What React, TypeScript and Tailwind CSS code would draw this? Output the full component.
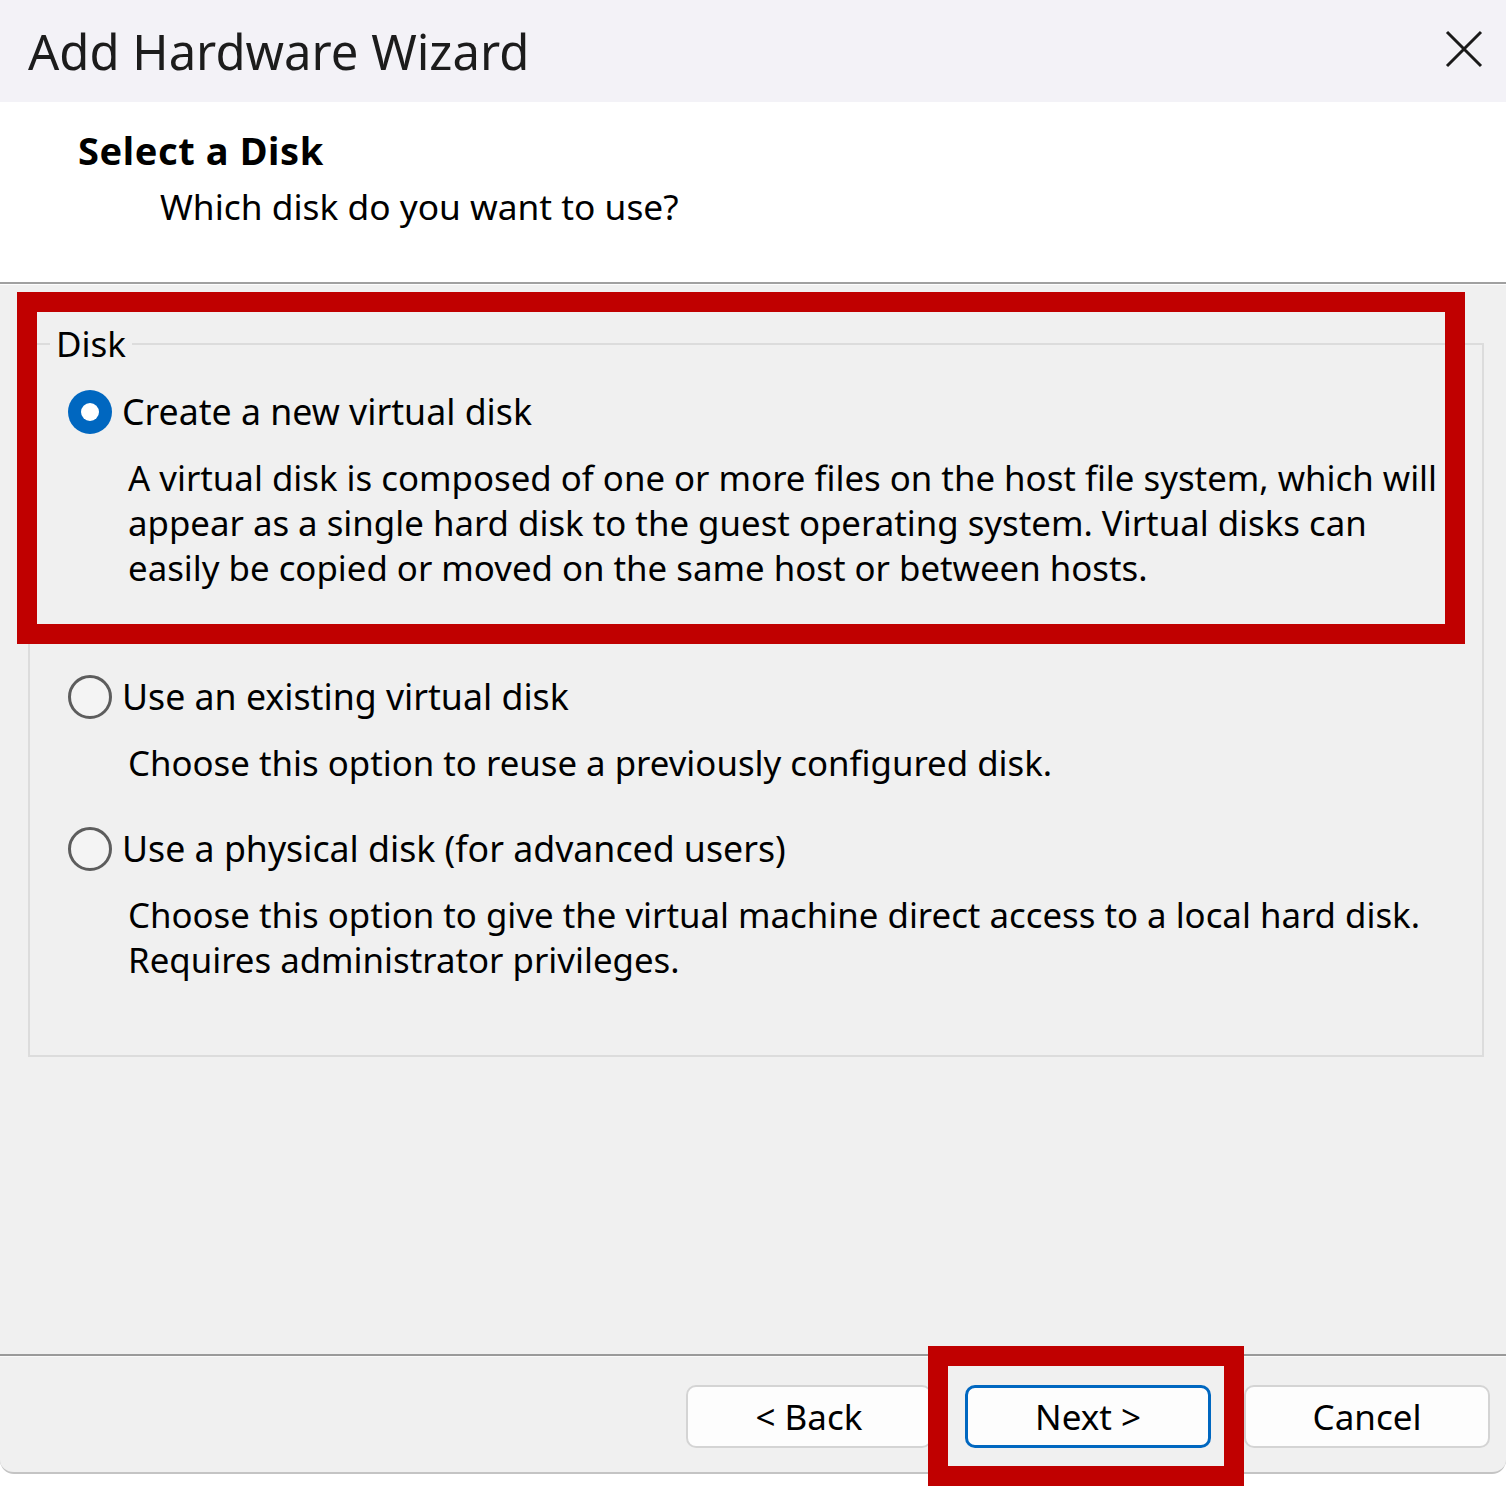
import React from "react";

const Radio = ({ checked }: { checked?: boolean }) =>
  checked ? (
    <span className="flex h-[44px] w-[44px] shrink-0 items-center justify-center rounded-full bg-[#0067c0]">
      <span className="h-[18px] w-[18px] rounded-full bg-white" />
    </span>
  ) : (
    <span className="h-[44px] w-[44px] shrink-0 rounded-full border-[3px] border-[#5d5d5d] bg-[#f4f4f4]" />
  );

const Option = ({
  label,
  lines,
  checked,
  className,
}: {
  label: string;
  lines: string[];
  checked?: boolean;
  className?: string;
}) => (
  <div className={className}>
    <div className="flex h-[45px] items-center gap-[10px] text-[35.7px]">
      <Radio checked={checked} />
      <span>{label}</span>
    </div>
    <div className="mt-[21px] pl-[60px] text-[34.8px]">
      {lines.map((l) => (
        <div key={l} className="whitespace-nowrap">
          {l}
        </div>
      ))}
    </div>
  </div>
);

const Button = ({ children, primary }: { children: React.ReactNode; primary?: boolean }) => (
  <button
    className={
      "flex h-[63px] w-[246px] items-center justify-center rounded-[10px] bg-[#fdfdfd] " +
      (primary ? "border-[3px] border-[#0067c0]" : "border-2 border-[#d4d4d4]")
    }
  >
    {children}
  </button>
);

export default function App() {
  return (
    <div className="relative h-[1486px] w-[1506px] overflow-hidden bg-white font-['Noto_Sans',sans-serif] text-[35px] leading-[45px] text-black">
      <div className="flex h-[1474px] flex-col overflow-hidden rounded-b-[14px] border-b-2 border-[#c4c4c4] bg-[#f0f0f0]">
        {/* title bar */}
        <div className="flex h-[102px] shrink-0 items-center justify-between bg-[#f3f2f7] pl-[28px] pr-[22px]">
          <span className="text-[49px] leading-none text-[#1c1c1c]">Add Hardware Wizard</span>
          <svg width="40" height="40" viewBox="0 0 40 40" className="mt-[-4px]">
            <path d="M3 3 L37 37 M37 3 L3 37" stroke="#1a1a1a" strokeWidth="3" />
          </svg>
        </div>

        {/* header */}
        <div className="h-[180px] shrink-0 bg-white pl-[78px] pt-[26px]">
          <div className="text-[38px] font-bold tracking-[0.6px]">Select a Disk</div>
          <div className="mt-[11px] pl-[82px] text-[35.3px]">Which disk do you want to use?</div>
        </div>
        <div className="h-[2px] shrink-0 bg-[#a0a0a0]" />
        <div className="h-[1px] shrink-0 bg-[#fdfdfd]" />

        {/* body */}
        <div className="flex-1 pl-[28px] pr-[22px] pt-[36px]">
          <fieldset className="h-[736px] border-2 border-[#dcdcdc]">
            <legend className="ml-[20px] px-[6px]">Disk</legend>
            <div className="pl-[38px]">
              <Option
                className="mt-[23px]"
                checked
                label="Create a new virtual disk"
                lines={[
                  "A virtual disk is composed of one or more files on the host file system, which will",
                  "appear as a single hard disk to the guest operating system. Virtual disks can",
                  "easily be copied or moved on the same host or between hosts.",
                ]}
              />
              <Option
                className="mt-[84px]"
                label="Use an existing virtual disk"
                lines={["Choose this option to reuse a previously configured disk."]}
              />
              <Option
                className="mt-[41px]"
                label="Use a physical disk (for advanced users)"
                lines={[
                  "Choose this option to give the virtual machine direct access to a local hard disk.",
                  "Requires administrator privileges.",
                ]}
              />
            </div>
          </fieldset>
        </div>

        <div className="h-[2px] shrink-0 bg-[#9a9a9a]" />
        <div className="h-[1px] shrink-0 bg-[#fafafa]" />

        {/* footer */}
        <div className="flex h-[115px] shrink-0 justify-end gap-[33px] pr-[16px] pt-[28px]">
          <Button>&lt; Back</Button>
          <Button primary>Next &gt;</Button>
          <Button>Cancel</Button>
        </div>
      </div>

      {/* annotation boxes */}
      <div className="pointer-events-none absolute left-[17px] top-[292px] h-[352px] w-[1448px] border-[20px] border-[#c00000]" />
      <div className="pointer-events-none absolute left-[928px] top-[1346px] h-[140px] w-[316px] border-[20px] border-[#c00000]" />
    </div>
  );
}
